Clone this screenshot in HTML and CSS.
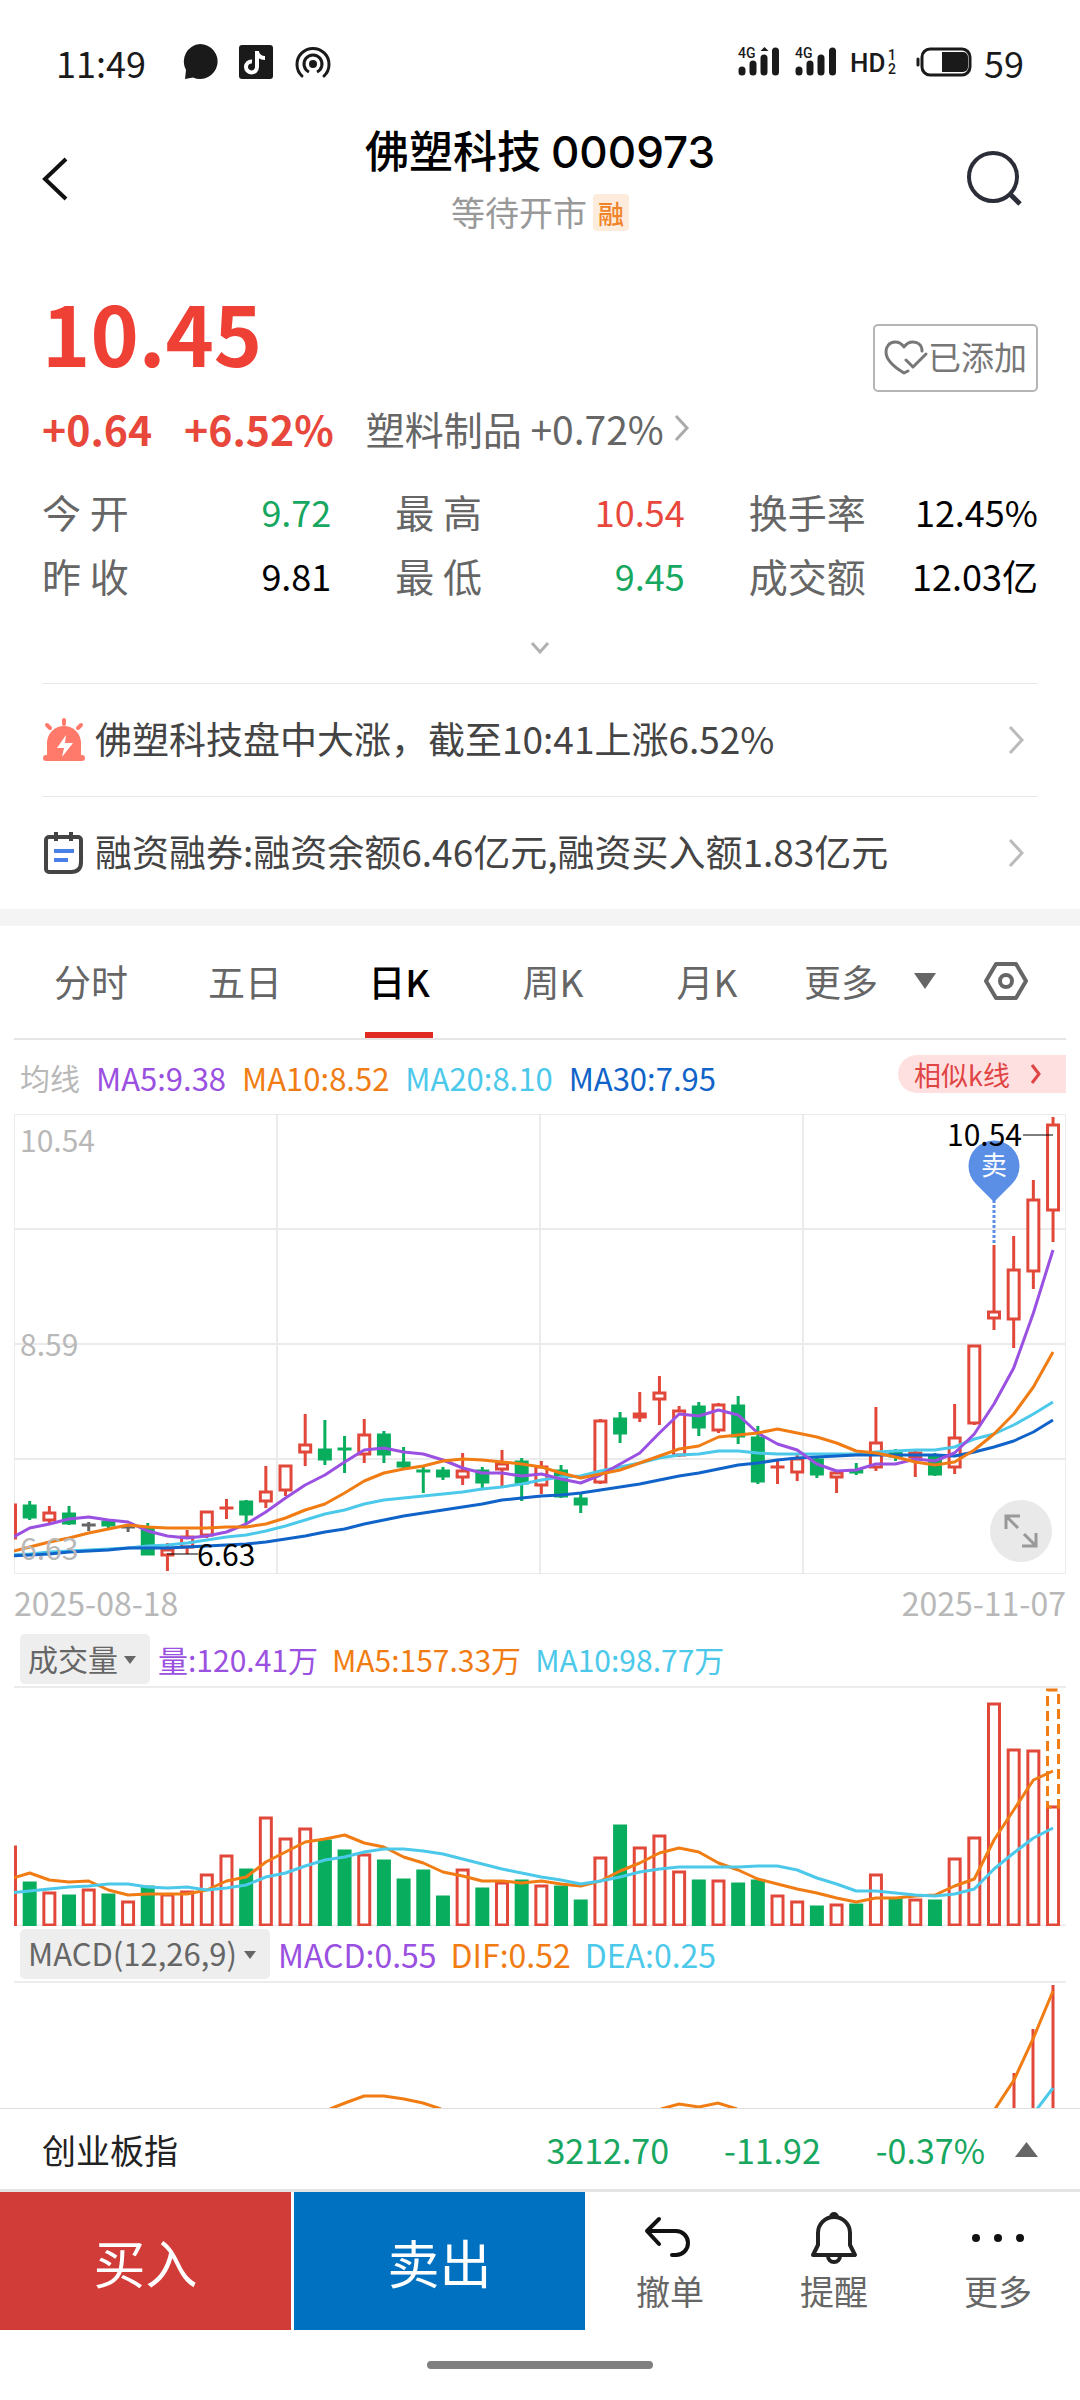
FILE: index.html
```html
<!DOCTYPE html>
<html lang="zh-CN">
<head>
  <meta charset="UTF-8">
  <meta name="viewport" content="width=device-width, initial-scale=1.0">
  <title>佛塑科技 000973</title>
  <link rel="stylesheet" href="styles.css">
</head>
<body>
  <div class="status-bar">
    <span class="status-text">11:49</span>
    <svg class="status-left" width="152" height="38" viewBox="0 0 152 38">
      <path d="M18 1a17.500 17.500 0 1 1-7 33.500l-8 1.500 1-9A17.500 17.500 0 0 1 18 1z" fill="#1a1a1a"/>
      <rect x="57" y="2" width="34" height="34" rx="3" fill="#1a1a1a"/>
      <path d="M75 8v16a5.500 5.500 0 1 1-5-5.500M75 9c1 4 4 6 8 6" fill="none" stroke="#fff" stroke-width="4"/>
      <g fill="none" stroke="#1a1a1a" stroke-width="3">
        <path d="M120 33a16 16 0 1 1 22 0" stroke-linecap="round"/>
        <path d="M127 29a9 9 0 1 1 8 0"/>
      </g>
      <circle cx="131" cy="21" r="4" fill="#1a1a1a"/>
    </svg>
    <svg class="status-right" width="236" height="34" viewBox="0 0 236 34">
      <g stroke="#1a1a1a" stroke-width="7" stroke-linecap="round">
        <path d="M4 25v2M15 19v8M26 13v14M37.500 6v21M61 25v2M72 19v8M83 13v14M94.500 6v21"/>
      </g>
      <path d="M22.500 6l4-4 4 4z" fill="#1a1a1a"/>
      <g class="status-glyph">
        <text x="0" y="13">4G</text>
        <text x="57" y="13">4G</text>
        <text x="112" y="27" class="hd">HD</text>
        <text x="150" y="15">1</text>
        <text x="150" y="29">2</text>
      </g>
      <rect x="184" y="4" width="48" height="26" rx="8" fill="none" stroke="#1a1a1a" stroke-width="3"/>
      <path d="M204 7h21a5 5 0 0 1 5 5v10a5 5 0 0 1-5 5h-21z" fill="#1a1a1a"/>
      <path d="M180 14v6" stroke="#1a1a1a" stroke-width="3" stroke-linecap="round"/>
    </svg>
    <span class="status-text">59</span>
  </div>

  <header class="header">
    <button class="icon-button" aria-label="返回">
      <svg width="56" height="56" viewBox="0 0 56 56"><path d="M10 8L-11 28l21 20" fill="none" stroke="#111" stroke-width="4"/></svg>
    </button>
    <div class="title">
      <h1>佛塑科技 <span>000973</span></h1>
      <p>等待开市 <span class="tag">融</span></p>
    </div>
    <button class="icon-button" aria-label="搜索">
      <svg width="56" height="56" viewBox="0 0 56 56"><circle cx="25" cy="26" r="24" fill="none" stroke="#2b2e38" stroke-width="4"/><path d="M42 43l10 10" stroke="#2b2e38" stroke-width="5"/></svg>
    </button>
  </header>

  <section class="quote">
    <div class="price-row">
      <span class="price">10.45</span>
      <button class="added">
        <svg width="44" height="36" viewBox="0 0 44 36" fill="none" stroke="#777" stroke-width="3" stroke-linecap="round" stroke-linejoin="round">
          <path d="M38 11C38 5 34 2 29 2c-4 0-7 2-9 5-2-3-5-5-9-5C5 2 2 7 2 12c0 8 8 15 18 21l4-2"/>
          <path d="M22 20l7 7 13-13"/>
        </svg>
        <span>已添加</span>
      </button>
    </div>
    <div class="change-row">
      <strong>+0.64</strong>
      <strong>+6.52%</strong>
      <a href="#">塑料制品 +0.72%<svg width="16" height="28" viewBox="0 0 16 28"><path d="M2 2l11 12L2 26" fill="none" stroke="#aaa" stroke-width="3"/></svg></a>
    </div>
    <div class="stats">
      <div><span>今 开</span><b class="green">9.72</b></div>
      <div><span>最 高</span><b class="red">10.54</b></div>
      <div><span>换手率</span><b>12.45%</b></div>
      <div><span>昨 收</span><b>9.81</b></div>
      <div><span>最 低</span><b class="green">9.45</b></div>
      <div><span>成交额</span><b>12.03亿</b></div>
    </div>
    <button class="expand" aria-label="展开">
      <svg width="20" height="14" viewBox="0 0 20 14"><path d="M2 2l8 9 8-9" fill="none" stroke="#b0b0b0" stroke-width="3"/></svg>
    </button>
    <a class="news" href="#">
      <svg width="44" height="44" viewBox="0 0 44 44">
        <path d="M5 38V25a17 17 0 0 1 34 0v13z" fill="#ff7a6b"/>
        <rect x="1" y="37" width="42" height="6" rx="3" fill="#ff7a6b"/>
        <path d="M22 2v4M5 7l3 3M39 7l-3 3" stroke="#ff7a6b" stroke-width="4" stroke-linecap="round"/>
        <path d="M24 17l-9 13h7l-2 9 11-14h-8z" fill="#fff"/>
      </svg>
      <span>佛塑科技盘中大涨，截至10:41上涨6.52%</span>
      <svg width="16" height="30" viewBox="0 0 16 30"><path d="M2 2l12 13L2 28" fill="none" stroke="#bbb" stroke-width="3"/></svg>
    </a>
    <a class="news" href="#">
      <svg width="44" height="44" viewBox="0 0 44 44">
        <path d="M7 6h29a3 3 0 0 1 3 3v22q0 10-10 10H7a3 3 0 0 1-3-3V9a3 3 0 0 1 3-3zM14 1v9M29 1v9" fill="none" stroke="#444" stroke-width="4" stroke-linejoin="round"/>
        <path d="M12 20h20M12 29h14" stroke="#4a7fe8" stroke-width="4"/>
      </svg>
      <span>融资融券:融资余额6.46亿元,融资买入额1.83亿元</span>
      <svg width="16" height="30" viewBox="0 0 16 30"><path d="M2 2l12 13L2 28" fill="none" stroke="#bbb" stroke-width="3"/></svg>
    </a>
  </section>

  <main class="charts">
    <nav class="tabs">
      <button>分时</button>
      <button>五日</button>
      <button class="active">日K</button>
      <button>周K</button>
      <button>月K</button>
      <button class="more">更多<svg width="22" height="16" viewBox="0 0 22 16"><path d="M0 0h22L11 16z" fill="#666"/></svg></button>
      <button class="settings" aria-label="设置">
        <svg width="44" height="40" viewBox="0 0 44 40" fill="none" stroke="#666" stroke-width="4" stroke-linejoin="round"><path d="M12 3h20l10 17-10 17H12L2 20z"/><circle cx="22" cy="20" r="6"/></svg>
      </button>
    </nav>

    <div class="legend averages">
      <span class="grey">均线</span>
      <span class="purple">MA5:9.38</span>
      <span class="orange">MA10:8.52</span>
      <span class="cyan">MA20:8.10</span>
      <span class="blue">MA30:7.95</span>
      <a class="similar" href="#">相似k线<svg width="12" height="20" viewBox="0 0 12 20"><path d="M2 1l7 9-7 9" fill="none" stroke="#e04444" stroke-width="3"/></svg></a>
    </div>

    <div class="kline">
      <svg viewBox="0 0 1052 460">
        <path class="grid" d="M0 115h1052M0 230h1052M0 345h1052M263 0v460M526 0v460M789 0v460"/>
        <path class="frame" d="M0.500 0.500h1051v459H0.500z"/>
        <g id="candles"></g>
        <g id="averages"></g>
        <g class="axis">
          <text x="6" y="38">10.54</text>
          <text x="6" y="242">8.59</text>
          <text x="6" y="446">6.63</text>
        </g>
        <path class="leader" d="M153 440h31M1009 21h30"/>
        <text x="183" y="452">6.63</text>
        <path d="M980 86v44" class="dots"/>
        <path d="M980 88l-18-18a25.500 25.500 0 1 1 36 0z" fill="#5b8fe6"/>
        <text x="967" y="61" class="pin">卖</text>
        <text x="933" y="32">10.54</text>
      </svg>
      <button class="fullscreen" aria-label="全屏">
        <svg width="36" height="36" viewBox="0 0 36 36" fill="none" stroke="#999" stroke-width="3"><path d="M3 16V3h14M3 3l12 12M33 20v13H19M33 33L21 21"/></svg>
      </button>
    </div>
    <div class="dates"><span>2025-08-18</span><span>2025-11-07</span></div>

    <div class="legend sub">
      <label class="picker"><select aria-label="副图一"><option>成交量</option></select></label>
      <span class="purple">量:120.41万</span>
      <span class="orange">MA5:157.33万</span>
      <span class="cyan">MA10:98.77万</span>
    </div>
    <svg class="plot" viewBox="0 0 1052 238">
      <path class="grid" d="M0 237.500h1052"/>
      <g id="volume"></g>
    </svg>

    <div class="legend sub macd">
      <label class="picker"><select aria-label="副图二"><option>MACD(12,26,9)</option></select></label>
      <span class="purple">MACD:0.55</span>
      <span class="orange">DIF:0.52</span>
      <span class="cyan">DEA:0.25</span>
    </div>
    <svg class="plot" viewBox="0 0 1052 125">
      <path d="M1000 90v35M1019 46v79M1039 2v123" stroke="#e2483a" stroke-width="3"/>
      <g fill="none" stroke-width="3">
        <path stroke="#f07c13" d="M316 126l15-6 19-7h20l20 3 19 4 18 6M647 126l18-5 20 3 19-4 19 6M981 126l19-29 19-41 20-48"/>
        <path stroke="#4cc9ea" d="M1023 126l16-21"/>
      </g>
    </svg>
  </main>

  <footer>
    <a class="index-bar" href="#">
      <span class="index-name">创业板指</span>
      <span>3212.70</span>
      <span>-11.92</span>
      <span>-0.37%</span>
      <svg width="23" height="15" viewBox="0 0 23 15"><path d="M0 15h23L11.500 0z" fill="#666"/></svg>
    </a>
    <div class="actions">
      <button class="buy">买入</button>
      <button class="sell">卖出</button>
      <div class="tools">
        <button>
          <svg width="52" height="52" viewBox="0 0 52 52" fill="none" stroke="#111" stroke-width="4" stroke-linecap="round" stroke-linejoin="round"><path d="M15 7L3 19l12 13M4 19h28a12 12 0 0 1 0 24h-4"/></svg>
          <span>撤单</span>
        </button>
        <button>
          <svg width="52" height="52" viewBox="0 0 52 52" fill="none" stroke="#222" stroke-width="4" stroke-linejoin="round"><path d="M10 33V21a16 16 0 0 1 32 0v12l5 10H5zM23 5a3 3 0 0 1 6 0M20 44a6 6 0 0 0 12 0"/></svg>
          <span>提醒</span>
        </button>
        <button>
          <svg width="52" height="52" viewBox="0 0 52 52" fill="#111"><circle cx="4" cy="26" r="4"/><circle cx="26" cy="26" r="4"/><circle cx="48" cy="26" r="4"/></svg>
          <span>更多</span>
        </button>
      </div>
    </div>
    <div class="home-bar"></div>
  </footer>

  <script src="script.js"></script>
</body>
</html>
```
FILE: styles.css
```css
* {
  box-sizing: border-box;
}

body {
  margin: 0;
  background-color: #fff;
  color: #111;
  font-family: "Noto Sans CJK SC", "Noto Sans", sans-serif;
}

button,
select {
  border: none;
  padding: 0;
  margin: 0;
  background: none;
  font-family: inherit;
  color: inherit;
}

a {
  color: inherit;
  text-decoration: none;
}

svg {
  flex: none;
}

.status-bar {
  display: flex;
  align-items: center;
  height: 124px;
  padding: 0 56px;
}

.status-text {
  font-size: 36px;
  line-height: 40px;
  color: #1a1a1a;
}

.status-left {
  margin-left: 36px;
}

.status-right {
  margin-left: auto;
  margin-right: 10px;
}

.status-glyph {
  font-family: Roboto, sans-serif;
  font-size: 14px;
  font-weight: 500;
  fill: #1a1a1a;
}

.hd {
  font-size: 26px;
}

.header {
  display: flex;
  align-items: center;
  justify-content: space-between;
  padding: 0 56px;
}

.icon-button svg {
  display: block;
  overflow: visible;
}

.title {
  text-align: center;
}

.title h1 {
  margin: 0 0 16px;
  font-size: 44px;
  line-height: 50px;
  font-weight: 500;
  color: #000;
}

.title h1 span {
  font-family: Inter, sans-serif;
  line-height: 40px;
}

.title p {
  display: flex;
  justify-content: center;
  align-items: center;
  gap: 6px;
  margin: 0;
  font-size: 34px;
  line-height: 44px;
  color: #999;
}

.tag {
  padding: 0 5px;
  background-color: #fdebdc;
  border-radius: 4px;
  font-size: 26px;
  font-weight: 500;
  line-height: 37px;
  color: #f08228;
}

.quote {
  padding: 48px 42px 0;
}

.price-row {
  display: flex;
  justify-content: space-between;
  height: 122px;
}

.price {
  font-size: 82px;
  line-height: 100px;
  font-weight: bold;
  color: #ee4035;
}

.added {
  display: flex;
  align-items: center;
  justify-content: center;
  height: 68px;
  margin-top: 42px;
  padding: 0 9px;
  border: 2px solid #b5b5b5;
  border-radius: 5px;
  font-size: 33px;
  color: #777;
}

.added span {
  padding-bottom: 4px;
  line-height: 40px;
}

.change-row {
  display: flex;
  align-items: center;
  height: 48px;
  color: #e8473b;
}

.change-row strong {
  margin-right: 32px;
  font-size: 41px;
}

.change-row a {
  display: flex;
  align-items: center;
  gap: 10px;
  font-size: 39px;
  color: #666;
}

.stats {
  display: grid;
  grid-template-columns: repeat(3, 1fr);
  column-gap: 64px;
  margin-top: 27px;
  font-size: 39px;
  line-height: 64px;
  color: #666;
}

.stats div {
  display: flex;
  justify-content: space-between;
}

.stats b {
  font-size: 36px;
  font-weight: normal;
  color: #000;
}

.stats .green {
  color: #17a75f;
}

.stats .red {
  color: #e8473b;
}

.expand {
  display: flex;
  align-items: center;
  justify-content: center;
  width: 100%;
  height: 76px;
  padding-top: 6px;
}

.news {
  display: flex;
  align-items: center;
  height: 113px;
  border-top: 1px solid #e8e8e8;
  font-size: 37px;
  color: #444;
}

.news span {
  flex: 1;
  padding: 0 0 4px 9px;
}

.news svg:last-child {
  margin-right: 14px;
}

.charts {
  border-top: 17px solid #f4f4f4;
  padding: 0 14px;
}

.tabs {
  display: flex;
  align-items: stretch;
  height: 114px;
  border-bottom: 2px solid #e5e5e5;
}

.tabs button {
  flex: 154;
  padding-bottom: 2px;
  font-size: 37px;
  color: #666;
}

.tabs .active {
  font-weight: 500;
  color: #000;
  background: linear-gradient(#e12a22, #e12a22) center bottom / 68px 6px no-repeat;
}

.tabs .more {
  display: flex;
  flex: 152;
  align-items: center;
  justify-content: flex-end;
  gap: 36px;
}

.tabs .settings {
  display: flex;
  flex: 130;
  align-items: center;
  justify-content: flex-end;
}

.settings svg {
  margin-right: 38px;
}

.legend {
  display: flex;
  align-items: center;
  font-size: 30px;
  white-space: nowrap;
}

.averages {
  gap: 16px;
  height: 74px;
  padding-left: 6px;
  font-size: 31px;
}

.averages .grey {
  font-size: 30px;
}

.similar {
  display: flex;
  align-items: center;
  gap: 20px;
  height: 38px;
  margin-left: auto;
  margin-bottom: 6px;
  padding: 0 24px 0 16px;
  background-color: #ffe0e0;
  border-radius: 19px 0 0 19px;
  font-size: 27px;
  color: #e04444;
}

.grey {
  color: #b8b8b8;
}

.purple {
  color: #9a50e0;
}

.orange {
  color: #f07c13;
}

.cyan {
  color: #4cc9ea;
}

.blue {
  color: #1063c8;
}

.kline {
  position: relative;
}

.kline > svg,
.plot {
  display: block;
  width: 100%;
}

.kline text {
  font-size: 30px;
  fill: #000;
}

.kline .axis text {
  fill: #b8b8b8;
}

.kline .pin {
  font-size: 26px;
  fill: #fff;
}

.grid,
.frame {
  fill: none;
  stroke: #ebebeb;
  stroke-width: 2;
}

.frame {
  stroke-width: 1;
}

.leader {
  stroke: #000;
}

.dots {
  stroke: #5b8fe6;
  stroke-width: 3;
  stroke-dasharray: 3 2;
}

.fullscreen {
  position: absolute;
  right: 14px;
  bottom: 12px;
  display: flex;
  align-items: center;
  justify-content: center;
  width: 62px;
  height: 62px;
  border-radius: 50%;
  background-color: #e9e9e9;
}

.up {
  fill: #fff;
  stroke: #e2483a;
  stroke-width: 3;
}

.down {
  fill: #08ad5d;
  stroke: #08ad5d;
  stroke-width: 3;
}

.flat {
  stroke: #666;
  stroke-width: 3;
}

.line {
  fill: none;
  stroke-width: 3;
  stroke-linejoin: round;
}

.forecast {
  fill: none;
  stroke: #f07c13;
  stroke-width: 3;
  stroke-dasharray: 10 5;
}

.dates {
  display: flex;
  justify-content: space-between;
  height: 57px;
  font-size: 32px;
  line-height: 56px;
  color: #b8b8b8;
}

.sub {
  gap: 14px;
  height: 57px;
  padding-left: 6px;
  border-bottom: 2px solid #ececec;
}

.macd {
  font-size: 32px;
}

.picker {
  position: relative;
  margin-right: -6px;
}

.picker select {
  display: block;
  appearance: none;
  height: 50px;
  padding: 0 32px 2px 8px;
  border-radius: 5px;
  background-color: #eee;
  font-size: 30px;
  color: #666;
}

.macd .picker select {
  font-size: 31px;
}

.picker::after {
  content: "";
  position: absolute;
  right: 14px;
  top: 22px;
  border: 6px solid transparent;
  border-top: 8px solid #666;
  border-bottom: none;
  pointer-events: none;
}

.index-bar {
  display: flex;
  align-items: center;
  justify-content: flex-end;
  height: 84px;
  padding: 0 42px;
  border-top: 1px solid #ddd;
  border-bottom: 3px solid #e5e5e5;
  font-size: 34px;
  color: #17a75f;
}

.index-bar span {
  margin-left: 55px;
}

.index-bar .index-name {
  margin: 0 auto 0 0;
  color: #222;
}

.index-bar svg {
  margin-left: 30px;
}

.actions {
  display: grid;
  grid-template-columns: 291fr 291fr 492fr;
  column-gap: 3px;
  height: 138px;
}

.buy,
.sell {
  font-size: 52px;
  color: #fff;
}

.buy {
  background-color: #d23c38;
}

.sell {
  background-color: #0070c0;
}

.tools {
  display: grid;
  grid-template-columns: repeat(3, 1fr);
}

.tools button {
  display: flex;
  flex-direction: column;
  align-items: center;
  padding-top: 20px;
  font-size: 34px;
  line-height: 54px;
  color: #666;
}

.home-bar {
  width: 226px;
  height: 8px;
  margin: 31px auto 30px;
  border-radius: 4px;
  background-color: #808080;
}
```
FILE: script.js
```js
const STEP = 19.68;
const START = -4;
const WIDTH = 11;
const centre = i => START + i * STEP;

// kind, high, body top, body bottom, low
const candles = [
  ['up', 391, 391, 424, 424], ['down', 387, 392, 403, 406], ['up', 392, 399, 406, 409],
  ['down', 392, 400, 409, 411], ['flat', 408, 411, 411, 417], ['down', 406, 408, 411, 414],
  ['flat', 411, 413, 413, 418], ['down', 409, 415, 440, 441], ['up', 429, 436, 441, 457],
  ['up', 416, 423, 433, 440], ['up', 397, 398, 421, 424], ['up', 385, 394, 394, 405],
  ['down', 386, 388, 400, 409], ['up', 352, 378, 387, 394], ['up', 351, 352, 376, 382],
  ['up', 300, 331, 338, 352], ['down', 306, 336, 345, 351], ['down', 322, 335, 335, 359],
  ['up', 305, 321, 340, 349], ['down', 317, 321, 340, 349], ['down', 333, 349, 352, 354],
  ['down', 352, 357, 357, 379], ['down', 353, 357, 362, 366], ['up', 339, 357, 363, 371],
  ['down', 353, 357, 368, 374], ['up', 336, 350, 355, 374], ['down', 344, 348, 369, 387],
  ['up', 347, 353, 371, 380], ['down', 351, 357, 382, 384], ['down', 380, 385, 390, 399],
  ['up', 305, 307, 368, 370], ['down', 298, 305, 319, 329], ['up', 278, 300, 303, 308],
  ['up', 262, 279, 285, 311], ['up', 292, 297, 341, 343], ['down', 288, 293, 313, 322],
  ['up', 289, 291, 316, 319], ['down', 282, 292, 322, 330], ['down', 312, 324, 367, 370],
  ['up', 347, 353, 353, 370], ['up', 341, 345, 358, 367], ['down', 343, 346, 360, 364],
  ['up', 356, 359, 363, 379], ['down', 349, 357, 358, 361], ['up', 293, 329, 353, 357],
  ['down', 335, 339, 342, 347], ['up', 337, 339, 343, 363], ['down', 339, 342, 360, 362],
  ['up', 290, 324, 353, 360], ['up', 231, 232, 309, 311], ['up', 131, 198, 204, 216],
  ['up', 122, 156, 205, 234], ['up', 66, 86, 157, 175], ['up', 3, 11, 96, 128]
];

const priceLines = {
  '#4cc9ea': [441, 440, 438, 437, 436, 435, 434, 432, 431, 429, 426, 423, 421, 417, 412, 406, 400, 396, 390, 386, 384, 382, 380, 378, 375, 373, 370, 366, 363, 362, 357, 353, 349, 344, 341, 340, 337, 337, 339, 340, 340, 340, 340, 340, 338, 337, 336, 336, 333, 325, 320, 311, 300, 288],
  '#1063c8': [442, 441, 440, 438, 437, 436, 434, 434, 434, 433, 432, 431, 430, 428, 425, 422, 418, 415, 410, 406, 402, 399, 396, 393, 390, 386, 384, 382, 381, 379, 376, 373, 370, 366, 362, 359, 355, 351, 349, 346, 344, 343, 342, 341, 341, 341, 341, 341, 342, 338, 333, 327, 318, 306],
  '#9a50e0': [425, 414, 410, 405, 403, 406, 408, 417, 422, 424, 422, 418, 410, 398, 384, 371, 361, 348, 336, 334, 338, 340, 346, 354, 359, 359, 362, 360, 365, 369, 361, 350, 339, 319, 300, 302, 296, 301, 319, 330, 336, 350, 357, 356, 350, 350, 345, 347, 339, 320, 290, 254, 199, 136],
  '#f07c13': [438, 433, 428, 424, 419, 415, 411, 413, 414, 414, 414, 413, 413, 410, 404, 396, 390, 379, 367, 359, 355, 352, 347, 345, 346, 348, 350, 353, 359, 364, 360, 356, 349, 342, 335, 332, 323, 321, 319, 315, 319, 323, 329, 337, 339, 343, 348, 351, 348, 336, 320, 300, 273, 238]
};

const volumes = [80, 44, 34, 31, 37, 32, 25, 40, 32, 35, 52, 71, 57, 109, 88, 98, 86, 76, 72, 66, 47, 56, 30, 57, 38, 44, 46, 41, 40, 26, 69, 101, 79, 91, 55, 46, 46, 43, 46, 31, 25, 20, 22, 22, 52, 28, 27, 26, 68, 89, 223, 177, 176, 120];

const volumeLines = {
  '#f07c13': [47, 53, 46, 44, 45, 36, 31, 32, 32, 32, 36, 45, 49, 64, 74, 84, 87, 91, 83, 79, 69, 63, 54, 50, 45, 45, 43, 45, 42, 40, 45, 55, 63, 73, 78, 74, 63, 56, 47, 42, 37, 33, 28, 24, 28, 28, 30, 31, 40, 47, 86, 116, 146, 155],
  '#4cc9ea': [33, 35, 37, 39, 40, 42, 42, 39, 38, 39, 36, 38, 41, 49, 53, 60, 66, 69, 74, 77, 77, 75, 72, 67, 62, 57, 53, 49, 46, 42, 45, 49, 54, 57, 59, 59, 59, 59, 60, 60, 56, 48, 42, 35, 35, 33, 31, 30, 32, 37, 57, 73, 88, 98]
};

const redVolume = [4, 6];

function polyline(color, values, toY) {
  const points = values.map((v, i) => `${centre(i).toFixed(1)},${toY(v)}`).join(' ');
  return `<polyline class="line" stroke="${color}" points="${points}"/>`;
}

function drawCandles() {
  document.getElementById('candles').innerHTML = candles.map(([kind, high, top, bottom, low], i) => {
    const x = centre(i);
    const wick = `M${x} ${high}V${top}M${x} ${bottom}V${low}`;
    const body = top === bottom
      ? `M${x - 7} ${top}h14`
      : `M${x - WIDTH / 2} ${top}h${WIDTH}V${bottom}h-${WIDTH}z`;
    return `<path class="${kind}" d="${wick}${body}"/>`;
  }).join('');

  document.getElementById('averages').innerHTML = Object.entries(priceLines)
    .map(([color, values]) => polyline(color, values, v => v)).join('');
}

function drawVolume() {
  const base = 238;
  const bars = volumes.map((v, i) => {
    const kind = redVolume.includes(i) ? 'up' : candles[i][0];
    return `<rect class="${kind}" x="${centre(i) - WIDTH / 2}" y="${base - v + 1}" width="${WIDTH}" height="${v - 2}"/>`;
  }).join('');
  const forecast = `<rect class="forecast" x="${centre(53) - WIDTH / 2}" y="2" width="${WIDTH}" height="117"/>`;
  const lines = Object.entries(volumeLines)
    .map(([color, values]) => polyline(color, values, v => base - v)).join('');
  document.getElementById('volume').innerHTML = bars + forecast + lines;
}

drawCandles();
drawVolume();
```
